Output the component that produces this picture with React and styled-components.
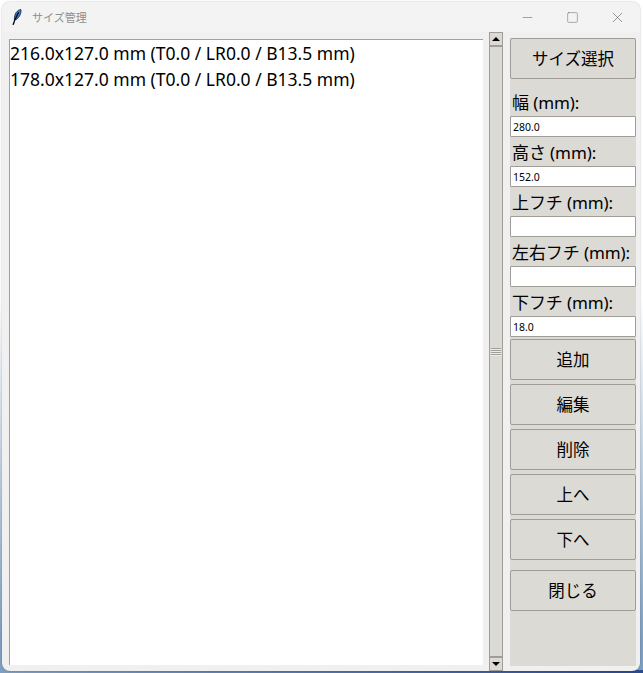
import React from "react";
import styled, { createGlobalStyle } from "styled-components";
import { Minus, Square, X } from "lucide-react";

const sizes = [
  "216.0x127.0 mm (T0.0 / LR0.0 / B13.5 mm)",
  "178.0x127.0 mm (T0.0 / LR0.0 / B13.5 mm)",
];

const fields = [
  { label: "幅 (mm):", value: "280.0" },
  { label: "高さ (mm):", value: "152.0" },
  { label: "上フチ (mm):", value: "" },
  { label: "左右フチ (mm):", value: "" },
  { label: "下フチ (mm):", value: "18.0" },
];

const actions = ["追加", "編集", "削除", "上へ", "下へ"];

const App = () => (
  <>
    <GlobalStyle />
    <Desktop>
      <Window>
        <TitleBar>
          <FeatherIcon viewBox="0 0 10 16">
            <path d="M8.8 0.5C5.2 1.2 2.2 4.6 2.4 10.8L4.4 10.4C7.2 8.4 9.6 4.2 8.8 0.5Z" fill="#3b7fd6" stroke="#14284a" strokeWidth="0.9" />
            <path d="M6.4 3.6L2.6 11.5C2.2 13 1.8 14.2 1.2 15.4" stroke="#0b0b0b" strokeWidth="1.3" fill="none" strokeLinecap="round" />
          </FeatherIcon>
          <Title>サイズ管理</Title>
          <WindowControls>
            <ControlButton><Minus size={15} strokeWidth={1} /></ControlButton>
            <ControlButton><Square size={13} strokeWidth={1} /></ControlButton>
            <ControlButton><X size={17} strokeWidth={1} /></ControlButton>
          </WindowControls>
        </TitleBar>
        <Body>
          <SizeList>
            {sizes.map((size) => (
              <SizeRow key={size}>{size}</SizeRow>
            ))}
          </SizeList>
          <Scrollbar>
            <Arrow $up />
            <Thumb>
              <Grip />
            </Thumb>
            <Arrow />
          </Scrollbar>
          <Sidebar>
            <ActionButton>サイズ選択</ActionButton>
            <Fields>
              {fields.map((field) => (
                <Field key={field.label}>
                  <FieldLabel>{field.label}</FieldLabel>
                  <FieldInput readOnly value={field.value} />
                </Field>
              ))}
            </Fields>
            <Actions>
              {actions.map((action) => (
                <ActionButton key={action}>{action}</ActionButton>
              ))}
            </Actions>
            <CloseButton>閉じる</CloseButton>
          </Sidebar>
        </Body>
      </Window>
    </Desktop>
  </>
);

const GlobalStyle = createGlobalStyle`
  html, body {
    margin: 0;
    padding: 0;
    background: #ffffff;
  }
`;

const Desktop = styled.div`
  width: 643px;
  height: 673px;
  overflow: hidden;
  padding: 2px 3px 0 2px;
  box-sizing: border-box;
  background:
    linear-gradient(90deg, #7f9fc0, #2a4a90) bottom / 100% 3px no-repeat,
    linear-gradient(#ffffff 0, #ffffff 300px, #7f9fc0 640px);
  font-family: "Noto Sans", "Noto Sans CJK JP", sans-serif;
`;

const Window = styled.div`
  height: 669px;
  background: #f0f0f0;
  border-radius: 8px;
  box-shadow: 0 0 2px rgba(0, 0, 0, 0.3);
  overflow: hidden;
`;

const TitleBar = styled.div`
  height: 30px;
  display: flex;
  align-items: center;
  padding-left: 10px;
  background: #f3f3f3;
`;

const FeatherIcon = styled.svg`
  width: 10px;
  height: 16px;
`;

const Title = styled.span`
  margin-left: 10px;
  font-size: 11px;
  color: #8e8e8e;
`;

const WindowControls = styled.div`
  display: flex;
  margin-left: auto;
`;

const ControlButton = styled.div`
  width: 45px;
  height: 30px;
  display: flex;
  align-items: center;
  justify-content: center;
  color: #6e6e6e;
`;

const Body = styled.div`
  display: flex;
  align-items: flex-start;
  padding-left: 7px;
`;

const SizeList = styled.div`
  width: 474px;
  height: 626px;
  margin-top: 7px;
  background: #fff;
  border-top: 1px solid #a0a0a0;
  border-left: 1px solid #a0a0a0;
  box-sizing: border-box;
`;

const SizeRow = styled.div`
  height: 26px;
  line-height: 26px;
  font-size: 17.5px;
  color: #000;
  white-space: nowrap;
`;

const Scrollbar = styled.div`
  width: 14px;
  height: 639px;
  margin-left: 6px;
  display: flex;
  flex-direction: column;
  background: #dcdad5;
`;

const Arrow = styled.div`
  height: 14px;
  box-sizing: border-box;
  border: 1px solid #a09d96;
  background: #dcdad5;
  display: flex;
  align-items: center;
  justify-content: center;

  &::after {
    content: "";
    border-left: 4px solid transparent;
    border-right: 4px solid transparent;
    ${({ $up }) => ($up ? "border-bottom: 4px solid #000;" : "border-top: 4px solid #000;")}
  }
`;

const Thumb = styled.div`
  flex: 1;
  box-sizing: border-box;
  border: 1px solid #a09d96;
  background: #dcdad5;
  display: flex;
  align-items: center;
  justify-content: center;
`;

const Grip = styled.div`
  width: 10px;
  height: 8px;
  background: repeating-linear-gradient(#a09d96 0, #a09d96 1px, #eeeeea 1px, #eeeeea 2px);
`;

const Sidebar = styled.div`
  width: 126px;
  height: 628px;
  margin-left: 7px;
  margin-top: 6px;
  background: #dcdad5;
  display: flex;
  flex-direction: column;
`;

const ActionButton = styled.div`
  height: 41px;
  flex: none;
  box-sizing: border-box;
  border: 1px solid #a09d96;
  border-radius: 2px;
  background: #dcdad5;
  display: flex;
  align-items: center;
  justify-content: center;
  padding-bottom: 1px;
  font-size: 16.5px;
  color: #000;
`;

const Fields = styled.div`
  display: flex;
  flex-direction: column;
`;

const Field = styled.div`
  height: 50px;
  display: flex;
  flex-direction: column;
  justify-content: flex-end;
  &:first-child {
    height: 58px;
  }
`;

const FieldLabel = styled.div`
  height: 27px;
  line-height: 27px;
  padding-left: 2px;
  font-size: 17px;
  letter-spacing: -0.1px;
  color: #000;
  white-space: nowrap;
`;

const FieldInput = styled.input`
  height: 21px;
  box-sizing: border-box;
  margin: 0;
  padding: 1px 2px;
  border: 1px solid #a09d96;
  border-radius: 1px;
  background: #fff;
  font-family: "Noto Sans", sans-serif;
  font-size: 10.5px;
  color: #000;
  outline: none;
`;

const Actions = styled.div`
  display: flex;
  flex-direction: column;
  gap: 4px;
  margin-top: 2px;
`;

const CloseButton = styled(ActionButton)`
  margin-top: 10px;
`;

export default App;
